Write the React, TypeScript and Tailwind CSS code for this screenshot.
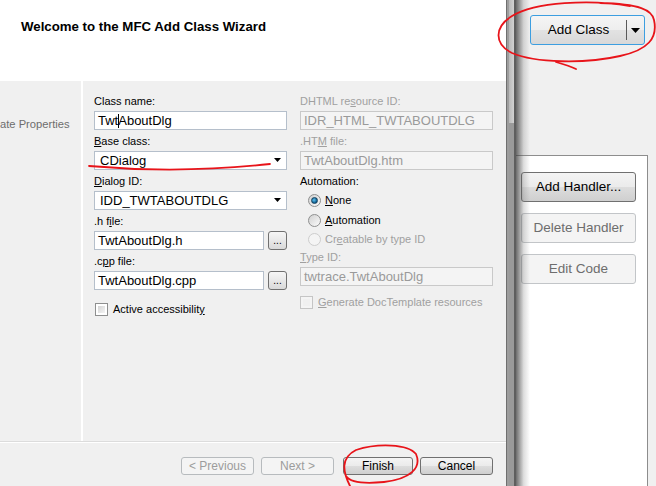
import React from "react";

const font = "font-['Liberation_Sans',Arial,sans-serif]";

type Kids = { children: React.ReactNode };

function Label({ children, disabled }: Kids & { disabled?: boolean }) {
  return (
    <div
      className={[
        "h-[14px] leading-[14px] text-[11px] mb-[3px] whitespace-nowrap",
        disabled ? "text-[#a0a0a0]" : "text-black",
      ].join(" ")}
    >
      {children}
    </div>
  );
}

function U({ children }: Kids) {
  return <span className="underline underline-offset-[1px]">{children}</span>;
}

function TextBox({
  value,
  disabled,
  narrow,
  caret,
}: {
  value: string;
  disabled?: boolean;
  narrow?: boolean;
  caret?: number;
}) {
  return (
    <div
      className={[
        "h-[19px] border flex items-center px-[3px] text-[13px] leading-none whitespace-nowrap",
        narrow ? "w-[170px]" : "w-[193px]",
        disabled
          ? "bg-[#f4f4f4] border-[#c9c9c9] text-[#9a9a9a]"
          : "bg-white border-[#b5bfcb] text-black",
      ].join(" ")}
    >
      {caret !== undefined ? (
        <>
          <span>{value.slice(0, caret)}</span>
          <span className="w-px h-[14px] bg-black -mr-px" />
          <span>{value.slice(caret)}</span>
        </>
      ) : (
        value
      )}
    </div>
  );
}

function Combo({ value }: { value: string }) {
  return (
    <div className="h-[19px] w-[193px] border border-[#b5bfcb] bg-white flex items-center pl-[5px] pr-[4px] text-[13px] leading-none">
      <span className="flex-1">{value}</span>
      <svg width="8" height="5" viewBox="0 0 8 5">
        <path d="M0 0 H7 L3.5 4 Z" fill="#000" />
      </svg>
    </div>
  );
}

function Browse() {
  return (
    <div className="w-[19px] h-[19px] rounded-[3px] border border-[#707070] bg-[linear-gradient(#f6f6f6,#e8e8e8_50%,#d9d9d9)] flex items-end justify-center pb-[3px] text-[10px] leading-none">
      ...
    </div>
  );
}

function Check({ disabled }: { disabled?: boolean }) {
  return (
    <div
      className={[
        "w-[13px] h-[13px] border p-[2px] shrink-0",
        disabled ? "border-[#c5c5c5] bg-[#f4f4f4]" : "border-[#8e8f8f] bg-white",
      ].join(" ")}
    >
      <div
        className={[
          "w-full h-full",
          disabled ? "bg-[#f0f0f0]" : "bg-[linear-gradient(135deg,#d4d4d4,#f4f4f4)]",
        ].join(" ")}
      />
    </div>
  );
}

function Radio({ on, disabled }: { on?: boolean; disabled?: boolean }) {
  return (
    <div
      className={[
        "w-[13px] h-[13px] rounded-full border flex items-center justify-center shrink-0",
        disabled
          ? "border-[#cdcdcd] bg-[#f4f4f4]"
          : "border-[#8e8f8f] bg-[linear-gradient(135deg,#d0d0d0,#fbfbfb)]",
      ].join(" ")}
    >
      {on && (
        <div className="w-[7px] h-[7px] rounded-full bg-[radial-gradient(circle_at_40%_40%,#5fc3f0,#0b5a8c_70%)] border border-[#16425e]" />
      )}
    </div>
  );
}

function WinButton({
  children,
  disabled,
  w,
}: Kids & { disabled?: boolean; w: string }) {
  return (
    <div
      className={[
        "h-[18px] rounded-[3px] border flex items-center justify-center text-[12px] leading-none",
        w,
        disabled
          ? "border-[#b7bbbe] bg-[#f4f4f4] text-[#9c9c9c]"
          : "border-[#707070] bg-[linear-gradient(#f4f4f4,#ebebeb_50%,#dddddd_51%,#cfcfcf)] text-black",
      ].join(" ")}
    >
      {children}
    </div>
  );
}

function SideButton({ children, disabled }: Kids & { disabled?: boolean }) {
  return (
    <div
      className={[
        "w-[115px] h-[30px] rounded-[3px] border flex items-center justify-center text-[13.5px] leading-none",
        disabled
          ? "border-[#c2c5c8] bg-[#f4f4f4] text-[#6d6d6d]"
          : "border-[#707070] bg-[linear-gradient(#f4f4f4,#ebebeb_50%,#dddddd_51%,#cfcfcf)] text-black",
      ].join(" ")}
    >
      {children}
    </div>
  );
}

export default function App() {
  return (
    <div className={`${font} relative w-[656px] h-[486px] overflow-hidden flex bg-[#f0f0f0]`}>
      {/* wizard dialog */}
      <div className="w-[506px] flex flex-col">
        <div className="h-[81px] bg-white pl-[21px] pt-[19px]">
          <div className="text-[13.25px] leading-[16px] font-bold text-black">
            Welcome to the MFC Add Class Wizard
          </div>
        </div>

        <div className="flex-1 flex">
          <div className="w-[83px] border-r-2 border-white pt-[36px]">
            <div className="text-[11.2px] leading-[14px] text-[#6d6d6d] whitespace-nowrap">
              ate Properties
            </div>
          </div>

          <div className="flex-1 flex flex-col">
            <div className="flex-1 flex gap-[13px] pl-[11px] pt-[13px]">
              {/* left column */}
              <div className="w-[193px] flex flex-col">
                <Label>Class name:</Label>
                <TextBox value="TwtAboutDlg" caret={3} />
                <div className="mt-[4px]">
                  <Label>
                    <U>B</U>ase class:
                  </Label>
                </div>
                <Combo value="CDialog" />
                <div className="mt-[4px]">
                  <Label>
                    <U>D</U>ialog ID:
                  </Label>
                </div>
                <Combo value="IDD_TWTABOUTDLG" />
                <div className="mt-[4px]">
                  <Label>
                    .h f<U>i</U>le:
                  </Label>
                </div>
                <div className="flex gap-[4px]">
                  <TextBox value="TwtAboutDlg.h" narrow />
                  <Browse />
                </div>
                <div className="mt-[4px]">
                  <Label>
                    .c<U>p</U>p file:
                  </Label>
                </div>
                <div className="flex gap-[4px]">
                  <TextBox value="TwtAboutDlg.cpp" narrow />
                  <Browse />
                </div>
                <div className="mt-[13px] ml-[1px] flex items-center gap-[5px] text-[11px] leading-none">
                  <Check />
                  <span>
                    Active accessibilit<U>y</U>
                  </span>
                </div>
              </div>

              {/* right column */}
              <div className="w-[193px] flex flex-col">
                <Label disabled>
                  DHTML re<U>s</U>ource ID:
                </Label>
                <TextBox value="IDR_HTML_TWTABOUTDLG" disabled />
                <div className="mt-[4px]">
                  <Label disabled>
                    .HT<U>M</U> file:
                  </Label>
                </div>
                <TextBox value="TwtAboutDlg.htm" disabled />
                <div className="mt-[4px]">
                  <Label>Automation:</Label>
                </div>
                <div className="-mt-[1px] flex flex-col text-[11px] leading-none pl-[8px]">
                  <div className="h-[20px] flex items-center gap-[4px]">
                    <Radio on />
                    <span>
                      <U>N</U>one
                    </span>
                  </div>
                  <div className="h-[20px] flex items-center gap-[4px]">
                    <Radio />
                    <span>
                      <U>A</U>utomation
                    </span>
                  </div>
                  <div className="h-[19px] flex items-center gap-[4px] text-[#a0a0a0]">
                    <Radio disabled />
                    <span>
                      Cr<U>e</U>atable by type ID
                    </span>
                  </div>
                </div>
                <div className="mt-[1px]">
                  <Label disabled>
                    <U>T</U>ype ID:
                  </Label>
                </div>
                <TextBox value="twtrace.TwtAboutDlg" disabled />
                <div className="mt-[10px] flex items-center gap-[5px] text-[11px] leading-none text-[#a0a0a0]">
                  <Check disabled />
                  <span>
                    <U>G</U>enerate DocTemplate resources
                  </span>
                </div>
              </div>
            </div>
          </div>
        </div>

        {/* button bar */}
        <div className="h-[45px] border-t border-[#dcdcdc] shadow-[inset_0_1px_0_#ffffff] flex justify-end items-start pt-[15px] pr-[13px]">
          <WinButton w="w-[73px]" disabled>
            &lt; Previous
          </WinButton>
          <div className="ml-[7px]">
            <WinButton w="w-[73px]" disabled>
              Next &gt;
            </WinButton>
          </div>
          <div className="ml-[9px]">
            <WinButton w="w-[70px]">Finish</WinButton>
          </div>
          <div className="ml-[7px]">
            <WinButton w="w-[73px]">Cancel</WinButton>
          </div>
        </div>
      </div>

      {/* window edge */}
      <div className="w-[10px] flex bg-[#8f8f8f]">
        <div className="w-[1px] bg-[#6f6f6f]" />
        <div className="w-[2px] bg-[#9d9d9d]" />
        <div className="w-[5px] flex flex-col">
          <div className="h-[123px] bg-[linear-gradient(90deg,#b9b9b9,#d2d2d2)]" />
          <div className="flex-1 bg-[#9a9a9a]" />
        </div>
        <div className="w-[2px] bg-[#5e5e5e]" />
      </div>

      {/* right tool panel */}
      <div className="relative flex-1 flex flex-col">
        <div className="mt-[15px] ml-[14px] w-[115px] h-[30px] rounded-[3px] border border-[#3c9ee0] bg-[linear-gradient(#f5f5f5,#eeeeee_50%,#e2e2e2_51%,#d8d8d8)] flex items-center">
          <div className="flex-1 text-center text-[13.5px] leading-none text-black">Add Class</div>
          <div className="w-px h-[20px] bg-[#5a5a5a]" />
          <div className="w-[17px] flex justify-center">
            <svg width="9" height="5" viewBox="0 0 9 5">
              <path d="M0 0 H9 L4.5 5 Z" fill="#000" />
            </svg>
          </div>
        </div>

        <div className="mt-[110px] w-[132px] flex-1 bg-white border-t border-r border-[#8d8d8d] pl-[5px] pt-[16px] flex flex-col gap-[11px]">
          <SideButton>Add Handler...</SideButton>
          <SideButton disabled>Delete Handler</SideButton>
          <SideButton disabled>Edit Code</SideButton>
        </div>

        {/* shadow cast by the wizard window */}
        <div className="absolute left-0 top-0 bottom-0 w-[14px] bg-[linear-gradient(90deg,rgba(60,60,60,0.75),rgba(120,120,120,0.25)_55%,rgba(255,255,255,0))]" />
      </div>

      {/* red annotations */}
      <svg
        className="absolute inset-0 pointer-events-none"
        width="656"
        height="486"
        viewBox="0 0 656 486"
        fill="none"
        stroke="#e8141a"
        strokeWidth="1.8"
        strokeLinecap="round"
      >
        <path d="M630 6 C590 -1 535 2 512 16 C494 27 494 44 512 53 C535 63 585 64 620 56 C648 50 658 38 654 20 C652 10 640 4 600 3" />
        <path d="M556 62 C563 64 570 66 576 69" />
        <path d="M89 166 Q180 174 270 164" />
        <path d="M350 486 C343 472 340 458 356 450 C378 443 408 444 416 454 C422 468 410 479 384 482 C364 484 350 482 346 476" />
      </svg>
    </div>
  );
}
